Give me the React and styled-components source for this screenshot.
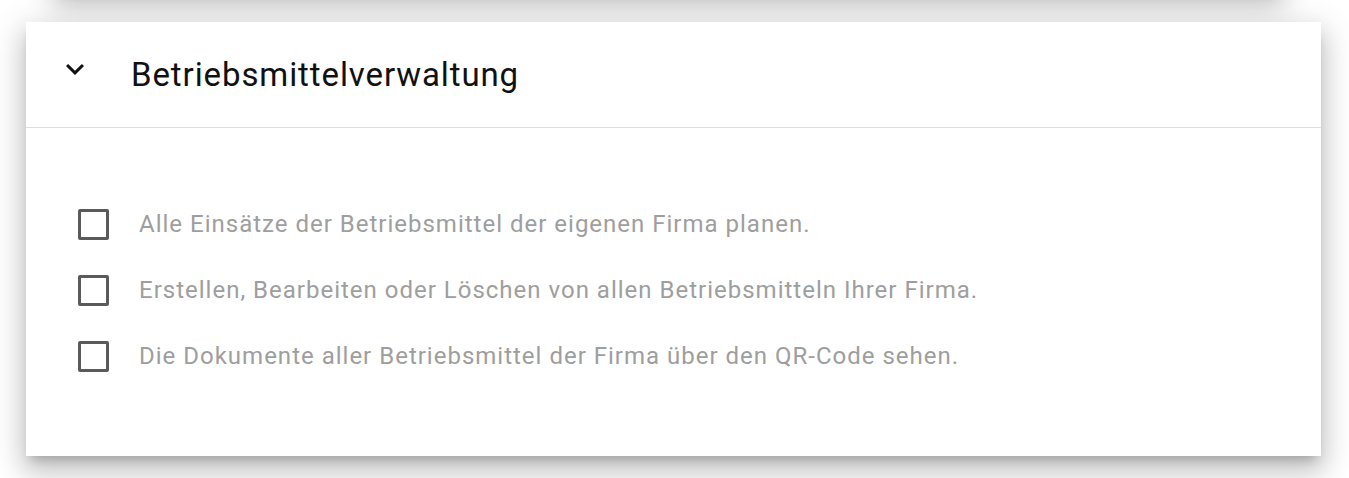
import React from 'react';
import styled, { createGlobalStyle } from 'styled-components';

const GlobalStyle = createGlobalStyle`
  body {
    margin: 0;
    background: #fff;
    font-family: Roboto, "Liberation Sans", Arial, sans-serif;
    overflow: hidden;
  }
`;

const permissions = [
  'Alle Einsätze der Betriebsmittel der eigenen Firma planen.',
  'Erstellen, Bearbeiten oder Löschen von allen Betriebsmitteln Ihrer Firma.',
  'Die Dokumente aller Betriebsmittel der Firma über den QR-Code sehen.',
];

const ChevronDown = () => (
  <svg width="36" height="36" viewBox="0 0 24 24" fill="#111">
    <path d="M16.59 8.59L12 13.17 7.41 8.59 6 10l6 6 6-6z" />
  </svg>
);

const App = () => {
  return (
    <>
      <GlobalStyle />
      <Page>
        <PrevCard />
        <Card>
          <Header>
            <Toggle>
              <ChevronDown />
            </Toggle>
            <Title>Betriebsmittelverwaltung</Title>
          </Header>
          <Body>
            {permissions.map((text) => (
              <Row key={text}>
                <Checkbox />
                <Label>{text}</Label>
              </Row>
            ))}
          </Body>
        </Card>
      </Page>
    </>
  );
};

export default App;

const Page = styled.div`
  display: flex;
  flex-direction: column;
  gap: 32px;
  padding: 0 28px 40px 26px;
`;

const Card = styled.div`
  background: #fff;
  box-shadow: 0 8px 10px -5px rgba(0, 0, 0, 0.2),
    0 16px 24px 2px rgba(0, 0, 0, 0.14), 0 6px 30px 5px rgba(0, 0, 0, 0.12);
`;

const PrevCard = styled(Card)`
  height: 100px;
  margin-top: -110px;
  margin-left: 30px;
  margin-right: 40px;
`;

const Header = styled.div`
  display: flex;
  align-items: center;
  height: 105px;
  padding-left: 31px;
  border-bottom: 1px solid #dedede;
`;

const Toggle = styled.div`
  display: flex;
  width: 36px;
  height: 36px;
  margin-top: -12px;
  margin-right: 38px;
`;

const Title = styled.h2`
  margin: 0;
  font-size: 33px;
  font-weight: 400;
  letter-spacing: 0.9px;
  color: #111;
`;

const Body = styled.div`
  display: flex;
  flex-direction: column;
  padding: 63px 0 67px 52px;
`;

const Row = styled.div`
  display: flex;
  align-items: center;
  height: 66px;
`;

const Checkbox = styled.span`
  box-sizing: border-box;
  width: 31px;
  height: 31px;
  border: 3px solid #5a5a5a;
  border-radius: 2px;
  margin-right: 30px;
  flex-shrink: 0;
`;

const Label = styled.span`
  font-size: 24px;
  letter-spacing: 1px;
  color: #9e9e9e;
`;
